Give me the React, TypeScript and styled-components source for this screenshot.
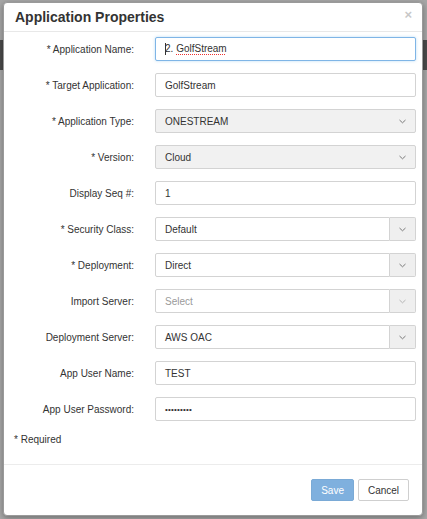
import { Fragment } from "react";
import styled, { createGlobalStyle } from "styled-components";

const GlobalStyle = createGlobalStyle`
  html, body {
    margin: 0;
    padding: 0;
  }
  body {
    font-family: "Liberation Sans", Arial, sans-serif;
    color: #333;
    background: #a7a7a7;
  }
`;

const Backdrop = styled.div`
  width: 427px;
  height: 519px;
  padding: 2px 0 0 3px;
  box-sizing: border-box;
  background:
    linear-gradient(#a7a7a7 0 40px, #4b4b4b 40px 70px, #a9a9a9 70px 100%);
`;

const Dialog = styled.div`
  width: 420px;
  height: 514px;
  box-sizing: border-box;
  background: #fff;
  border: 1px solid #9a9a9a;
  border-radius: 4px;
  box-shadow: 0 2px 6px rgba(0, 0, 0, 0.35);
  display: flex;
  flex-direction: column;
`;

const Header = styled.div`
  height: 28px;
  border-bottom: 1px solid #e8e8e8;
  display: flex;
  align-items: center;
  justify-content: space-between;
  padding: 0 10px 0 11px;
`;

const Title = styled.h4`
  margin: 0;
  font-size: 14px;
  font-weight: bold;
  color: #333;
`;

const Close = styled.span`
  font-size: 13px;
  font-weight: bold;
  color: #c8c8c8;
  line-height: 1;
  margin-top: -6px;
`;

const Body = styled.div`
  flex: 1;
  padding: 5px 8px 0 10px;
`;

const Form = styled.div`
  display: grid;
  grid-template-columns: 120px 261px;
  column-gap: 21px;
  row-gap: 12px;
  align-items: center;
`;

const Label = styled.label`
  text-align: right;
  font-size: 10px;
  color: #333;
  white-space: nowrap;
`;

const Field = styled.div<{ $focus?: boolean; $gray?: boolean }>`
  height: 24px;
  box-sizing: border-box;
  border: 1px solid ${p => (p.$focus ? "#7fb5e6" : "#d3d3d3")};
  border-radius: 2px;
  background: ${p => (p.$gray ? "#f1f1f1" : "#fff")};
  box-shadow: ${p => (p.$focus ? "0 0 3px rgba(102,175,233,0.45)" : "none")};
  display: flex;
  align-items: center;
  padding-left: 9px;
  font-size: 10px;
  color: #333;
`;

const Value = styled.span<{ $muted?: boolean }>`
  flex: 1;
  color: ${p => (p.$muted ? "#9a9a9a" : "#333")};
`;

const Caret = styled.span`
  display: inline-block;
  width: 1px;
  height: 12px;
  background: #333;
  vertical-align: middle;
  margin-right: -1px;
`;

const Misspelled = styled.span`
  text-decoration: underline dotted #e33;
  text-decoration-thickness: 1px;
  text-underline-offset: 2px;
`;

const Dots = styled.span`
  font-size: 8px;
  letter-spacing: 0.2px;
  color: #333;
`;

const Arrow = styled.span`
  width: 26px;
  display: flex;
  align-items: center;
  justify-content: center;
`;

const Combo = styled.div`
  display: flex;
  height: 24px;
`;

const ComboField = styled(Field)`
  flex: 1;
  border-radius: 2px 0 0 2px;
`;

const Addon = styled.span`
  width: 26px;
  box-sizing: border-box;
  border: 1px solid #d3d3d3;
  border-left: none;
  border-radius: 0 2px 2px 0;
  background: #efefef;
  display: flex;
  align-items: center;
  justify-content: center;
`;

const Required = styled.p`
  margin: 13px 0 0 0;
  font-size: 10px;
  color: #333;
`;

const Footer = styled.div`
  border-top: 1px solid #ececec;
  padding: 14px 13px 14px 0;
  display: flex;
  justify-content: flex-end;
  gap: 4px;
`;

const Button = styled.button<{ $primary?: boolean }>`
  height: 22px;
  padding: 0 ${p => (p.$primary ? "9px" : "8px")};
  min-width: ${p => (p.$primary ? "42px" : "51px")};
  font-family: "Liberation Sans", Arial, sans-serif;
  font-size: 10px;
  border-radius: 2px;
  border: 1px solid ${p => (p.$primary ? "#7aaad6" : "#cfcfcf")};
  background: ${p => (p.$primary ? "#7fb0de" : "#fff")};
  color: ${p => (p.$primary ? "#fff" : "#333")};
  cursor: ${p => (p.$primary ? "not-allowed" : "pointer")};
`;

function Chevron({ faint }: { faint?: boolean }) {
  return (
    <svg width="7" height="5" viewBox="0 0 7 5">
      <polyline
        points="0.5,1 3.5,3.8 6.5,1"
        fill="none"
        stroke={faint ? "#b5b5b5" : "#7a7a7a"}
        strokeWidth="1"
      />
    </svg>
  );
}

type Row =
  | { label: string; kind: "text"; value: string }
  | { label: string; kind: "select"; value: string }
  | { label: string; kind: "combo"; value: string; muted?: boolean };

const rows: Row[] = [
  { label: "* Target Application:", kind: "text", value: "GolfStream" },
  { label: "* Application Type:", kind: "select", value: "ONESTREAM" },
  { label: "* Version:", kind: "select", value: "Cloud" },
  { label: "Display Seq #:", kind: "text", value: "1" },
  { label: "* Security Class:", kind: "combo", value: "Default" },
  { label: "* Deployment:", kind: "combo", value: "Direct" },
  { label: "Import Server:", kind: "combo", value: "Select", muted: true },
  { label: "Deployment Server:", kind: "combo", value: "AWS OAC" },
  { label: "App User Name:", kind: "text", value: "TEST" },
];

function Control({ row }: { row: Row }) {
  if (row.kind === "select") {
    return (
      <Field $gray>
        <Value>{row.value}</Value>
        <Arrow>
          <Chevron />
        </Arrow>
      </Field>
    );
  }
  if (row.kind === "combo") {
    return (
      <Combo>
        <ComboField>
          <Value $muted={row.muted}>{row.value}</Value>
        </ComboField>
        <Addon>
          <Chevron faint={row.muted} />
        </Addon>
      </Combo>
    );
  }
  return (
    <Field>
      <Value>{row.value}</Value>
    </Field>
  );
}

export default function App() {
  return (
    <>
      <GlobalStyle />
      <Backdrop>
        <Dialog>
          <Header>
            <Title>Application Properties</Title>
            <Close>×</Close>
          </Header>
          <Body>
            <Form>
              <Label>* Application Name:</Label>
              <Field $focus>
                <Value>
                  <Caret />2. <Misspelled>GolfStream</Misspelled>
                </Value>
              </Field>
              {rows.map(r => (
                <Fragment key={r.label}>
                  <Label>{r.label}</Label>
                  <Control row={r} />
                </Fragment>
              ))}
              <Label>App User Password:</Label>
              <Field>
                <Dots>•••••••••</Dots>
              </Field>
            </Form>
            <Required>* Required</Required>
          </Body>
          <Footer>
            <Button $primary disabled>
              Save
            </Button>
            <Button>Cancel</Button>
          </Footer>
        </Dialog>
      </Backdrop>
    </>
  );
}
